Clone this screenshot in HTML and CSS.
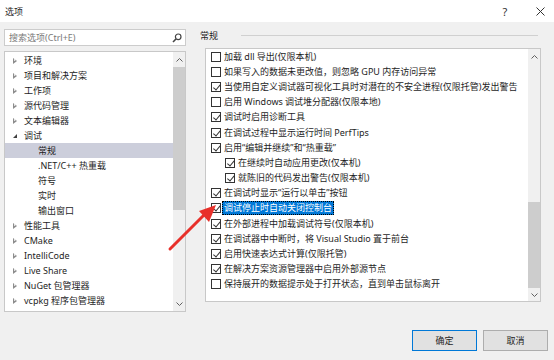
FILE: index.html
```html
<!DOCTYPE html>
<html lang="zh-CN">
<head>
<meta charset="utf-8">
<link rel="stylesheet" href="styles.css">
</head>
<body>
<div class="titlebar">
  <span class="title">选项</span>
  <span class="tb-btn help">?</span>
  <span class="tb-btn close"><svg width="9" height="9" viewBox="0 0 9 9"><path d="M0.5 0.5 L8.5 8.5 M8.5 0.5 L0.5 8.5" stroke="#333" stroke-width="1" fill="none"/></svg></span>
</div>
<div class="content">
  <div class="left">
    <div class="search">
      <span class="ph">搜索选项(Ctrl+E)</span>
      <svg class="mag" width="10" height="10" viewBox="0 0 10 10"><circle cx="6.2" cy="3.8" r="2.8" stroke="#444" stroke-width="1.2" fill="none"/><path d="M4.2 5.8 L1 9" stroke="#444" stroke-width="1.6"/></svg>
    </div>
    <div class="tree">
      <div class="tree-list">
        <div class="row"><span class="tri"></span>环境</div>
        <div class="row"><span class="tri"></span>项目和解决方案</div>
        <div class="row"><span class="tri"></span>工作项</div>
        <div class="row"><span class="tri"></span>源代码管理</div>
        <div class="row"><span class="tri"></span>文本编辑器</div>
        <div class="row"><span class="tri open"></span>调试</div>
        <div class="row child sel">常规</div>
        <div class="row child">.NET/C++ 热重载</div>
        <div class="row child">符号</div>
        <div class="row child">实时</div>
        <div class="row child">输出窗口</div>
        <div class="row"><span class="tri"></span>性能工具</div>
        <div class="row"><span class="tri"></span>CMake</div>
        <div class="row"><span class="tri"></span>IntelliCode</div>
        <div class="row"><span class="tri"></span>Live Share</div>
        <div class="row"><span class="tri"></span>NuGet 包管理器</div>
        <div class="row"><span class="tri"></span>vcpkg 程序包管理器</div>
        <div class="row"><span class="tri"></span>Web Forms 设计器</div>
      </div>
      <div class="vscroll tree-scroll">
        <div class="sb-btn up"><svg width="7" height="4" viewBox="0 0 7 4"><polyline points="0.5,3.5 3.5,0.5 6.5,3.5" stroke="#606060" fill="none"/></svg></div>
        <div class="thumb"></div>
        <div class="track"></div>
        <div class="sb-btn down"><svg width="7" height="4" viewBox="0 0 7 4"><polyline points="0.5,0.5 3.5,3.5 6.5,0.5" stroke="#606060" fill="none"/></svg></div>
      </div>
    </div>
  </div>
  <div class="right">
    <div class="section-head"><span>常规</span><div class="rule"></div></div>
    <div class="opts">
      <div class="opt-list">
        <div class="opt"><span class="cb"></span><span class="lbl">加载 dll 导出(仅限本机)</span></div>
        <div class="opt"><span class="cb"></span><span class="lbl">如果写入的数据未更改值，则忽略 GPU 内存访问异常</span></div>
        <div class="opt"><span class="cb on"></span><span class="lbl">当使用自定义调试器可视化工具时对潜在的不安全进程(仅限托管)发出警告</span></div>
        <div class="opt"><span class="cb"></span><span class="lbl">启用 Windows 调试堆分配器(仅限本地)</span></div>
        <div class="opt"><span class="cb on"></span><span class="lbl">调试时启用诊断工具</span></div>
        <div class="opt"><span class="cb on"></span><span class="lbl">在调试过程中显示运行时间 PerfTips</span></div>
        <div class="opt"><span class="cb on"></span><span class="lbl">启用“编辑并继续”和“热重载”</span></div>
        <div class="opt sub"><span class="cb on"></span><span class="lbl">在继续时自动应用更改(仅本机)</span></div>
        <div class="opt sub"><span class="cb on"></span><span class="lbl">就陈旧的代码发出警告(仅限本机)</span></div>
        <div class="opt"><span class="cb on"></span><span class="lbl">在调试时显示“运行以单击”按钮</span></div>
        <div class="opt"><span class="cb on"></span><span class="lbl focus">调试停止时自动关闭控制台</span></div>
        <div class="opt"><span class="cb on"></span><span class="lbl">在外部进程中加载调试符号(仅限本机)</span></div>
        <div class="opt"><span class="cb on"></span><span class="lbl">在调试器中中断时，将 Visual Studio 置于前台</span></div>
        <div class="opt"><span class="cb on"></span><span class="lbl">启用快速表达式计算(仅限托管)</span></div>
        <div class="opt"><span class="cb on"></span><span class="lbl">在解决方案资源管理器中启用外部源节点</span></div>
        <div class="opt"><span class="cb"></span><span class="lbl">保持展开的数据提示处于打开状态，直到单击鼠标离开</span></div>
      </div>
      <div class="vscroll opt-scroll">
        <div class="sb-btn up"><svg width="7" height="4" viewBox="0 0 7 4"><polyline points="0.5,3.5 3.5,0.5 6.5,3.5" stroke="#606060" fill="none"/></svg></div>
        <div class="track"></div>
        <div class="thumb"></div>
        <div class="sb-btn down"><svg width="7" height="4" viewBox="0 0 7 4"><polyline points="0.5,0.5 3.5,3.5 6.5,0.5" stroke="#606060" fill="none"/></svg></div>
      </div>
    </div>
  </div>
</div>
<div class="footer">
  <button class="btn primary">确定</button>
  <button class="btn">取消</button>
</div>
<svg class="arrow" width="70" height="70" viewBox="0 0 70 70">
  <path d="M4 56 L40 20" stroke="#e8302a" stroke-width="3" stroke-linecap="round"/>
  <polygon points="50,12 33,18 43,29" fill="#e8302a"/>
</svg>
</body>
</html>
```
FILE: styles.css
```css
html, body { margin: 0; padding: 0; }
body {
  width: 554px;
  height: 360px;
  overflow: hidden;
  position: relative;
  background: #f0f0f0;
  font-family: "Noto Sans", "Noto Sans CJK SC", sans-serif;
  font-size: 9px;
  color: #1e1e1e;
}
.titlebar {
  height: 22px;
  background: #fff;
  display: flex;
  align-items: center;
  padding-left: 5px;
}
.title { flex: 1; }
.tb-btn {
  width: 28px;
  height: 22px;
  display: flex;
  align-items: center;
  justify-content: center;
}
.help { margin-right: 7px; font-size: 11px; color: #333; }

.content {
  display: flex;
  padding: 7px 0 0 4px;
}
.left {
  width: 182px;
  display: flex;
  flex-direction: column;
  gap: 5px;
}
.search {
  height: 17px;
  box-sizing: border-box;
  border: 1px solid #cccccc;
  background: #fff;
  display: flex;
  align-items: center;
  padding: 0 3px 0 4px;
  color: #7a7a7a;
}
.ph { flex: 1; }
.tree {
  height: 261px;
  box-sizing: border-box;
  border: 1px solid #c8c8c8;
  background: #fff;
  display: flex;
  overflow: hidden;
}
.tree-list {
  flex: 1;
  padding-top: 1px;
  overflow: hidden;
}
.row {
  height: 15px;
  display: flex;
  align-items: center;
  padding-left: 8px;
  white-space: nowrap;
}
.row.child { padding-left: 33px; }
.row.sel { background: #cccedb; }
.tri {
  width: 0;
  height: 0;
  border-top: 3px solid transparent;
  border-bottom: 3px solid transparent;
  border-left: 4px solid #8c8c8c;
  margin-right: 7px;
  position: relative;
}
.tri::after {
  content: "";
  position: absolute;
  left: -3px;
  top: -1.5px;
  border-top: 1.5px solid transparent;
  border-bottom: 1.5px solid transparent;
  border-left: 2px solid #fff;
}
.tri.open {
  border: none;
  width: 0;
  height: 0;
  border-left: 4px solid transparent;
  border-bottom: 4px solid #404040;
  margin-left: 0;
  margin-right: 7px;
}
.tri.open::after { display: none; }

.vscroll {
  background: #f0f0f0;
  display: flex;
  flex-direction: column;
}
.tree-scroll { width: 12px; }
.opt-scroll { width: 12px; }
.sb-btn {
  height: 15px;
  display: flex;
  align-items: center;
  justify-content: center;
  flex: none;
}
.thumb { background: #cdcdcd; flex: none; }
.tree-scroll .thumb { height: 143px; }
.track { flex: 1; }
.opt-scroll .thumb { height: 86px; }
.opt-scroll .down { height: 13px; }

.right {
  margin-left: 10px;
  width: 345px;
}
.section-head {
  height: 12px;
  display: flex;
  align-items: center;
  padding-left: 4px;
  margin-bottom: 7px;
}
.rule {
  flex: 1;
  height: 1px;
  background: #d0d0d0;
  margin-left: 23px;
  margin-right: 3px;
}
.opts {
  margin-left: 9px;
  height: 254px;
  box-sizing: border-box;
  border: 1px solid #c8c8c8;
  background: #fff;
  display: flex;
}
.opt-list {
  flex: 1;
  overflow: hidden;
}
.opt {
  height: 15.2px;
  display: flex;
  align-items: center;
  padding-left: 5px;
  white-space: nowrap;
}
.opt.sub { padding-left: 19px; }
.cb {
  width: 10px;
  height: 10px;
  box-sizing: border-box;
  border: 1px solid #333;
  background: #fff;
  flex: none;
  position: relative;
}
.cb.on::after {
  content: "";
  position: absolute;
  left: 2.5px;
  top: 0px;
  width: 2.5px;
  height: 5.5px;
  border-right: 1px solid #333;
  border-bottom: 1px solid #333;
  transform: rotate(40deg);
}
.lbl {
  margin-left: 1px;
  padding: 0 2px;
  height: 14px;
  line-height: 14px;
  box-sizing: border-box;
}
.lbl.focus {
  background: #0078d7;
  color: #fff;
  outline: 1px dotted #000;
  outline-offset: -1px;
}

.footer {
  display: flex;
  justify-content: flex-end;
  gap: 6px;
  padding-right: 6px;
  margin-top: 18px;
}
.btn {
  width: 65px;
  height: 21px;
  box-sizing: border-box;
  border: 1px solid #adadad;
  background: #e1e1e1;
  font: inherit;
  color: #1e1e1e;
  padding: 0;
}
.btn.primary { border-color: #0078d7; }

.arrow {
  position: absolute;
  left: 166px;
  top: 193px;
}
```
